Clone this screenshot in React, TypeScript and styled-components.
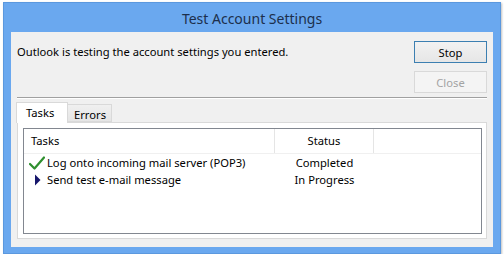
import React from 'react';
import styled, { createGlobalStyle } from 'styled-components';

const GlobalStyle = createGlobalStyle`
  html, body {
    margin: 0;
    padding: 0;
    background: #ffffff;
  }
  body {
    font-family: "Noto Sans", "Open Sans", sans-serif;
    font-size: 11.2px;
    color: #000;
  }
`;

interface Task {
    name: string;
    status: string;
    state: 'done' | 'running';
}

const tasks: Task[] = [
    { name: 'Log onto incoming mail server (POP3)', status: 'Completed', state: 'done' },
    { name: 'Send test e-mail message', status: 'In Progress', state: 'running' },
];

const CheckIcon = () => (
    <svg width="16" height="14" viewBox="0 0 16 14">
        <path d="M1 8 L5.5 12.5 L15 1.5" fill="none" stroke="#2f8f2f" strokeWidth="2.2" strokeLinecap="round" strokeLinejoin="round" />
    </svg>
);

const ArrowIcon = () => (
    <svg width="16" height="14" viewBox="0 0 16 14">
        <polygon points="6,1.5 11.5,7 6,12.5" fill="#16166b" />
    </svg>
);

const App: React.FC = () => {
    return (
        <>
            <GlobalStyle />
            <Window>
                <TitleBar>Test Account Settings</TitleBar>
                <Client>
                    <TopRow>
                        <Message>Outlook is testing the account settings you entered.</Message>
                        <ButtonColumn>
                            <Button $primary>Stop</Button>
                            <Button disabled>Close</Button>
                        </ButtonColumn>
                    </TopRow>
                    <Separator />
                    <TabStrip>
                        <Tab $active>Tasks</Tab>
                        <Tab>Errors</Tab>
                    </TabStrip>
                    <TabPanel>
                        <ListView>
                            <HeaderRow>
                                <HeaderCell $width={251}>Tasks</HeaderCell>
                                <HeaderCell $width={99} $center>Status</HeaderCell>
                                <HeaderCell $width={106} />
                            </HeaderRow>
                            {tasks.map((task) => (
                                <Row key={task.name}>
                                    <NameCell>
                                        <IconSlot>{task.state === 'done' ? <CheckIcon /> : <ArrowIcon />}</IconSlot>
                                        {task.name}
                                    </NameCell>
                                    <StatusCell>{task.status}</StatusCell>
                                </Row>
                            ))}
                        </ListView>
                    </TabPanel>
                </Client>
            </Window>
        </>
    );
};

const Window = styled.div`
  margin: 2px 0 0 3px;
  width: 498px;
  height: 252px;
  box-sizing: border-box;
  background: #6aa8ef;
  border: 1px solid #5b98de;
  display: flex;
  flex-direction: column;
  box-shadow: 1px 1px 2px rgba(0, 0, 0, 0.25);
`;

const TitleBar = styled.div`
  height: 29px;
  display: flex;
  align-items: center;
  justify-content: center;
  font-size: 14px;
  color: #1c2f4c;
  padding-top: 1px;
  box-sizing: border-box;
`;

const Client = styled.div`
  margin: 0 7px 6px 7px;
  flex: 1;
  background: #f0f0f0;
  padding: 9px 6px 0 6px;
  display: flex;
  flex-direction: column;
`;

const TopRow = styled.div`
  display: flex;
  justify-content: space-between;
  align-items: flex-start;
`;

const Message = styled.div`
  padding-top: 3px;
  line-height: 16px;
`;

const ButtonColumn = styled.div`
  display: flex;
  flex-direction: column;
  gap: 8px;
`;

const Button = styled.button<{ $primary?: boolean }>`
  width: 73px;
  height: 22px;
  box-sizing: border-box;
  font-family: inherit;
  font-size: 11.2px;
  padding: 0;
  color: #000;
  border: 1px solid ${(p) => (p.$primary ? '#3c7fb1' : '#acacac')};
  background: linear-gradient(#f2f2f2, #e6e6e6);

  &:disabled {
    color: #a3a3a3;
    border-color: #d9d9d9;
    background: #f4f4f4;
  }
`;

const Separator = styled.div`
  margin-top: 4px;
  width: 470px;
  height: 1px;
  background: #a0a0a0;
  border-bottom: 1px solid #ffffff;
`;

const TabStrip = styled.div`
  display: flex;
  align-items: flex-end;
  margin-top: 3px;
  height: 20px;
  position: relative;
  z-index: 1;
  margin-left: -1px;
`;

const Tab = styled.div<{ $active?: boolean }>`
  box-sizing: border-box;
  height: ${(p) => (p.$active ? '21px' : '18px')};
  margin-bottom: ${(p) => (p.$active ? '-1px' : '0')};
  padding: ${(p) => (p.$active ? '2px 0 0 9px' : '2px 0 0 6px')};
  width: ${(p) => (p.$active ? '52px' : '44px')};
  background: ${(p) => (p.$active ? '#ffffff' : 'linear-gradient(#f0f0f0, #e5e5e5)')};
  border: 1px solid #d9d9d9;
  border-bottom: ${(p) => (p.$active ? 'none' : '1px solid #d9d9d9')};
  border-left: ${(p) => (p.$active ? '1px solid #d9d9d9' : 'none')};
`;

const TabPanel = styled.div`
  width: 470px;
  height: 117px;
  box-sizing: border-box;
  background: #ffffff;
  border: 1px solid #d9d9d9;
  padding: 5px 4px 0 5px;
`;

const ListView = styled.div`
  width: 459px;
  height: 106px;
  box-sizing: border-box;
  border: 1px solid #828790;
  background: #ffffff;
`;

const HeaderRow = styled.div`
  display: flex;
  height: 24px;
  border-bottom: 1px solid #f0f0f0;
`;

const HeaderCell = styled.div<{ $width: number; $center?: boolean }>`
  width: ${(p) => p.$width}px;
  box-sizing: border-box;
  padding-left: ${(p) => (p.$center ? '0' : '7px')};
  text-align: ${(p) => (p.$center ? 'center' : 'left')};
  line-height: 24px;
  border-right: 1px solid #e5e5e5;

  &:last-child {
    border-right: none;
  }
`;

const Row = styled.div`
  display: flex;
  height: 17px;
  line-height: 17px;
`;

const NameCell = styled.div`
  width: 251px;
  display: flex;
  align-items: center;
  padding-left: 5px;
  box-sizing: border-box;
`;

const IconSlot = styled.span`
  display: inline-flex;
  width: 18px;
`;

const StatusCell = styled.div`
  width: 99px;
  text-align: center;
`;

export default App;
